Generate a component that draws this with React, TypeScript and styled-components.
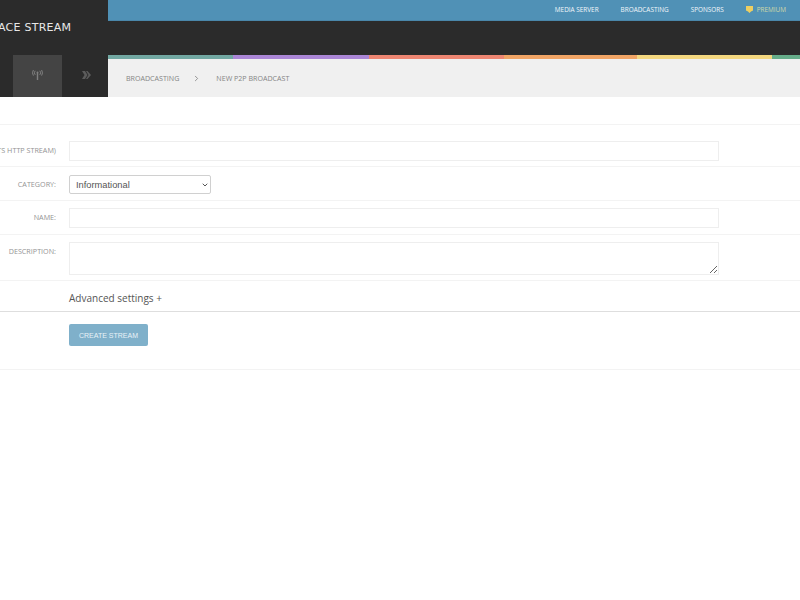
import styled, { createGlobalStyle } from 'styled-components';
import { ChevronDown, ChevronRight } from 'lucide-react';

const GlobalStyle = createGlobalStyle`
  html, body {
    margin: 0;
    background: #fff;
    overflow: hidden;
  }
  * {
    box-sizing: border-box;
  }
`;

const Page = styled.div`
  width: 800px;
  height: 600px;
  overflow: hidden;
  font-family: "Open Sans", "Liberation Sans", sans-serif;
`;

const Header = styled.header`
  display: grid;
  grid-template-columns: 108px 1fr;
  height: 97px;
`;

const Sidebar = styled.div`
  display: flex;
  flex-direction: column;
  justify-content: space-between;
  background: #2b2b2b;
  overflow: hidden;
`;

const Logo = styled.div`
  margin: 21px 0 0 -2px;
  color: #e8e8e8;
  font-family: "DejaVu Sans", sans-serif;
  font-size: 11px;
  line-height: 13px;
  letter-spacing: 0.25px;
  white-space: nowrap;
`;

const Tabs = styled.div`
  display: flex;
  padding-left: 13px;
`;

const Tab = styled.div<{ $active?: boolean }>`
  display: flex;
  flex-shrink: 0;
  align-items: center;
  justify-content: center;
  width: 49px;
  height: 42px;
  padding-bottom: 2px;
  color: ${props => (props.$active ? '#808080' : '#5c5c5c')};
  background: ${props => (props.$active ? '#444' : 'transparent')};
`;

const HeaderMain = styled.div`
  display: flex;
  flex-direction: column;
`;

const TopBar = styled.nav`
  display: flex;
  justify-content: flex-end;
  align-items: center;
  gap: 22px;
  height: 21px;
  padding-right: 14px;
  padding-bottom: 1px;
  background: #5091b6;
  border-bottom: 1px solid #4a87aa;
`;

const TopLink = styled.span<{ $premium?: boolean }>`
  display: flex;
  align-items: center;
  gap: 4px;
  color: ${props => (props.$premium ? '#cfd8a8' : '#f2f7fa')};
  font-size: 6.4px;
  font-weight: 500;
  white-space: nowrap;
`;

const DarkBar = styled.div`
  height: 34px;
  background: #2b2b2b;
`;

const Rainbow = styled.div`
  display: flex;
  height: 4px;
`;

const RainbowPart = styled.div<{ $color: string; $width: number }>`
  width: ${props => props.$width}px;
  background: ${props => props.$color};
`;

const Breadcrumb = styled.div`
  display: flex;
  align-items: center;
  flex: 1;
  padding-left: 18px;
  background: #f0f0f0;
  color: #858585;
  font-size: 7.1px;
  white-space: nowrap;
`;

const Crumb = styled.span``;

const CrumbSeparator = styled.span`
  display: flex;
  width: 37px;
  padding-left: 13px;
  color: #777;
`;

const Form = styled.form`
  margin: 0;
`;

const Row = styled.div<{ $height: number; $top?: number; $strong?: boolean }>`
  display: grid;
  grid-template-columns: 56px 1fr;
  column-gap: 13px;
  height: ${props => props.$height}px;
  padding-top: ${props => props.$top ?? 0}px;
  border-bottom: 1px solid ${props => (props.$strong ? '#dedede' : '#f3f3f3')};
`;

const Label = styled.label`
  display: flex;
  justify-content: flex-end;
  height: 20px;
  padding-top: 3px;
  color: #949494;
  font-size: 7.2px;
  line-height: 12px;
  white-space: nowrap;
`;

const TextInput = styled.input`
  display: block;
  width: 650px;
  height: 20px;
  background: #fff;
  border: 1px solid #eeeeee;
  outline: none;
`;

const SelectWrap = styled.div`
  position: relative;
  width: 142px;
  height: 19px;
  color: #555;

  svg {
    position: absolute;
    top: 6px;
    right: 2px;
    pointer-events: none;
  }
`;

const Select = styled.select`
  display: block;
  width: 100%;
  height: 100%;
  padding-left: 6px;
  appearance: none;
  background: #fff;
  border: 1px solid #d0d0d0;
  border-radius: 2px;
  color: #555;
  font-family: "Liberation Sans", sans-serif;
  font-size: 9.3px;
`;

const TextArea = styled.textarea`
  display: block;
  width: 650px;
  height: 33px;
  background: #fff;
  border: 1px solid #eeeeee;
  outline: none;
`;

const AdvancedLink = styled.div`
  color: #555;
  font-size: 10px;
  line-height: 14px;
`;

const SubmitButton = styled.button`
  display: block;
  width: 79px;
  height: 22px;
  padding: 0;
  background: #7fb0ca;
  border: none;
  border-radius: 2px;
  color: #e8f2f7;
  font-family: "Liberation Sans", sans-serif;
  font-size: 7px;
`;

const rainbow = [
  { color: '#72a8a2', width: 125 },
  { color: '#ab86d6', width: 136 },
  { color: '#ee8672', width: 135 },
  { color: '#f0a465', width: 133 },
  { color: '#f3d77f', width: 135 },
  { color: '#66ad8a', width: 28 },
];

function AntennaIcon() {
  return (
    <svg width="11" height="10" viewBox="0 0 11 10" fill="none" stroke="currentColor">
      <path d="M5.5 3v7" strokeWidth="1.4" />
      <circle cx="5.5" cy="2.5" r="1" fill="currentColor" stroke="none" />
      <path d="M3.2 .8a3 3 0 0 0 0 4M7.8 .8a3 3 0 0 1 0 4" strokeWidth="1" />
      <path d="M1.4 0a5 5 0 0 0 0 5.6M9.6 0a5 5 0 0 1 0 5.6" strokeWidth="1" />
    </svg>
  );
}

function ForwardIcon() {
  return (
    <svg width="9" height="8" viewBox="0 0 9 8" fill="currentColor">
      <path d="M0 0l3 0 2.5 4L3 8H0l2.5-4z" />
      <path d="M4 0h1.500L9 4 5.500 8H4l2.500-4z" />
    </svg>
  );
}

export default function App() {
  return (
    <Page>
      <GlobalStyle />
      <Header>
        <Sidebar>
          <Logo>ACE STREAM</Logo>
          <Tabs>
            <Tab $active>
              <AntennaIcon />
            </Tab>
            <Tab>
              <ForwardIcon />
            </Tab>
          </Tabs>
        </Sidebar>
        <HeaderMain>
          <TopBar>
            <TopLink>MEDIA SERVER</TopLink>
            <TopLink>BROADCASTING</TopLink>
            <TopLink>SPONSORS</TopLink>
            <TopLink $premium>
              <svg width="7" height="7" viewBox="0 0 7 7">
                <path d="M0 0h7v4.500L5 5.500 3.500 7 2 5.500 0 4.500z" fill="#edcf62" />
              </svg>
              PREMIUM
            </TopLink>
          </TopBar>
          <DarkBar />
          <Rainbow>
            {rainbow.map(part => (
              <RainbowPart key={part.color} $color={part.color} $width={part.width} />
            ))}
          </Rainbow>
          <Breadcrumb>
            <Crumb>BROADCASTING</Crumb>
            <CrumbSeparator>
              <ChevronRight size={9} />
            </CrumbSeparator>
            <Crumb>NEW P2P BROADCAST</Crumb>
          </Breadcrumb>
        </HeaderMain>
      </Header>
      <Form>
        <Row $height={28} />
        <Row $height={42} $top={16}>
          <Label>STREAM URL (HLS/TS HTTP STREAM)</Label>
          <TextInput />
        </Row>
        <Row $height={34} $top={8}>
          <Label>CATEGORY:</Label>
          <SelectWrap>
            <Select defaultValue="Informational">
              <option>Informational</option>
            </Select>
            <ChevronDown size={8} strokeWidth={3} />
          </SelectWrap>
        </Row>
        <Row $height={34} $top={7}>
          <Label>NAME:</Label>
          <TextInput />
        </Row>
        <Row $height={46} $top={7}>
          <Label>DESCRIPTION:</Label>
          <TextArea />
        </Row>
        <Row $height={31} $top={10} $strong>
          <span />
          <AdvancedLink>Advanced settings +</AdvancedLink>
        </Row>
        <Row $height={58} $top={12}>
          <span />
          <SubmitButton type="button">CREATE STREAM</SubmitButton>
        </Row>
      </Form>
    </Page>
  );
}
